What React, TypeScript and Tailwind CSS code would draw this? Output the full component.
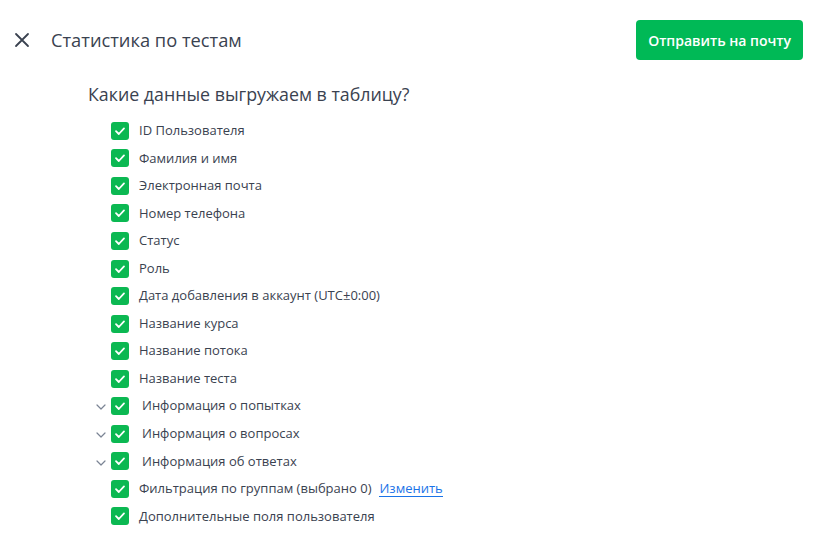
import React from "react";

const items: { label: string; chevron?: boolean; link?: boolean }[] = [
  { label: "ID Пользователя" },
  { label: "Фамилия и имя" },
  { label: "Электронная почта" },
  { label: "Номер телефона" },
  { label: "Статус" },
  { label: "Роль" },
  { label: "Дата добавления в аккаунт (UTC±0:00)" },
  { label: "Название курса" },
  { label: "Название потока" },
  { label: "Название теста" },
  { label: "Информация о попытках", chevron: true },
  { label: "Информация о вопросах", chevron: true },
  { label: "Информация об ответах", chevron: true },
  { label: "Фильтрация по группам (выбрано 0)", link: true },
  { label: "Дополнительные поля пользователя" },
];

function Check() {
  return (
    <span className="flex h-[18px] w-[18px] shrink-0 items-center justify-center rounded-[3px] bg-[#0bb852]">
      <svg width="12" height="12" viewBox="0 0 12 12" fill="none">
        <path d="M2 6.2 4.8 9 10 3.4" stroke="#fff" strokeWidth="1.8" strokeLinecap="round" strokeLinejoin="round" />
      </svg>
    </span>
  );
}

export default function App() {
  return (
    <div className="h-[559px] w-[832px] bg-white text-[#3a4250]" style={{ fontFamily: "'Open Sans', sans-serif" }}>
      <div className="flex items-center justify-between pl-[14px] pr-[29px] pt-[20px]">
        <div className="flex items-center">
          <svg width="16" height="16" viewBox="0 0 16 16" fill="none" className="mr-[21px]">
            <path d="M2 2 14 14M14 2 2 14" stroke="#3a4250" strokeWidth="1.8" strokeLinecap="round" />
          </svg>
          <span className="-mt-[1px] text-[18.3px] text-[#3a4250]">Статистика по тестам</span>
        </div>
        <button className="h-[40px] rounded-[4px] bg-[#00b956] px-[12px] text-[14px] font-semibold text-white">
          Отправить на почту
        </button>
      </div>
      <div className="pl-[88px] pt-[21px]">
        <div className="text-[17.8px] leading-[26px] text-[#3a4250]">Какие данные выгружаем в таблицу?</div>
        <div className="mt-[10px] flex flex-col">
          {items.map((it) => (
            <div key={it.label} className="relative flex h-[27.55px] items-center pl-[23px]">
              {it.chevron && (
                <svg width="10" height="6" viewBox="0 0 10 6" fill="none" className="absolute left-[8px] top-[12px]">
                  <path d="M1 1 5 5 9 1" stroke="#7b8494" strokeWidth="1.2" strokeLinecap="round" strokeLinejoin="round" />
                </svg>
              )}
              <Check />
              <span className={`${it.chevron ? "ml-[13px]" : "ml-[10px]"} text-[13px] text-[#3a4250]`}>{it.label}</span>
              {it.link && (
                <span className="ml-[8px] border-b border-[#1a73e8] text-[13px] leading-[16px] text-[#1a73e8]">Изменить</span>
              )}
            </div>
          ))}
        </div>
      </div>
    </div>
  );
}
